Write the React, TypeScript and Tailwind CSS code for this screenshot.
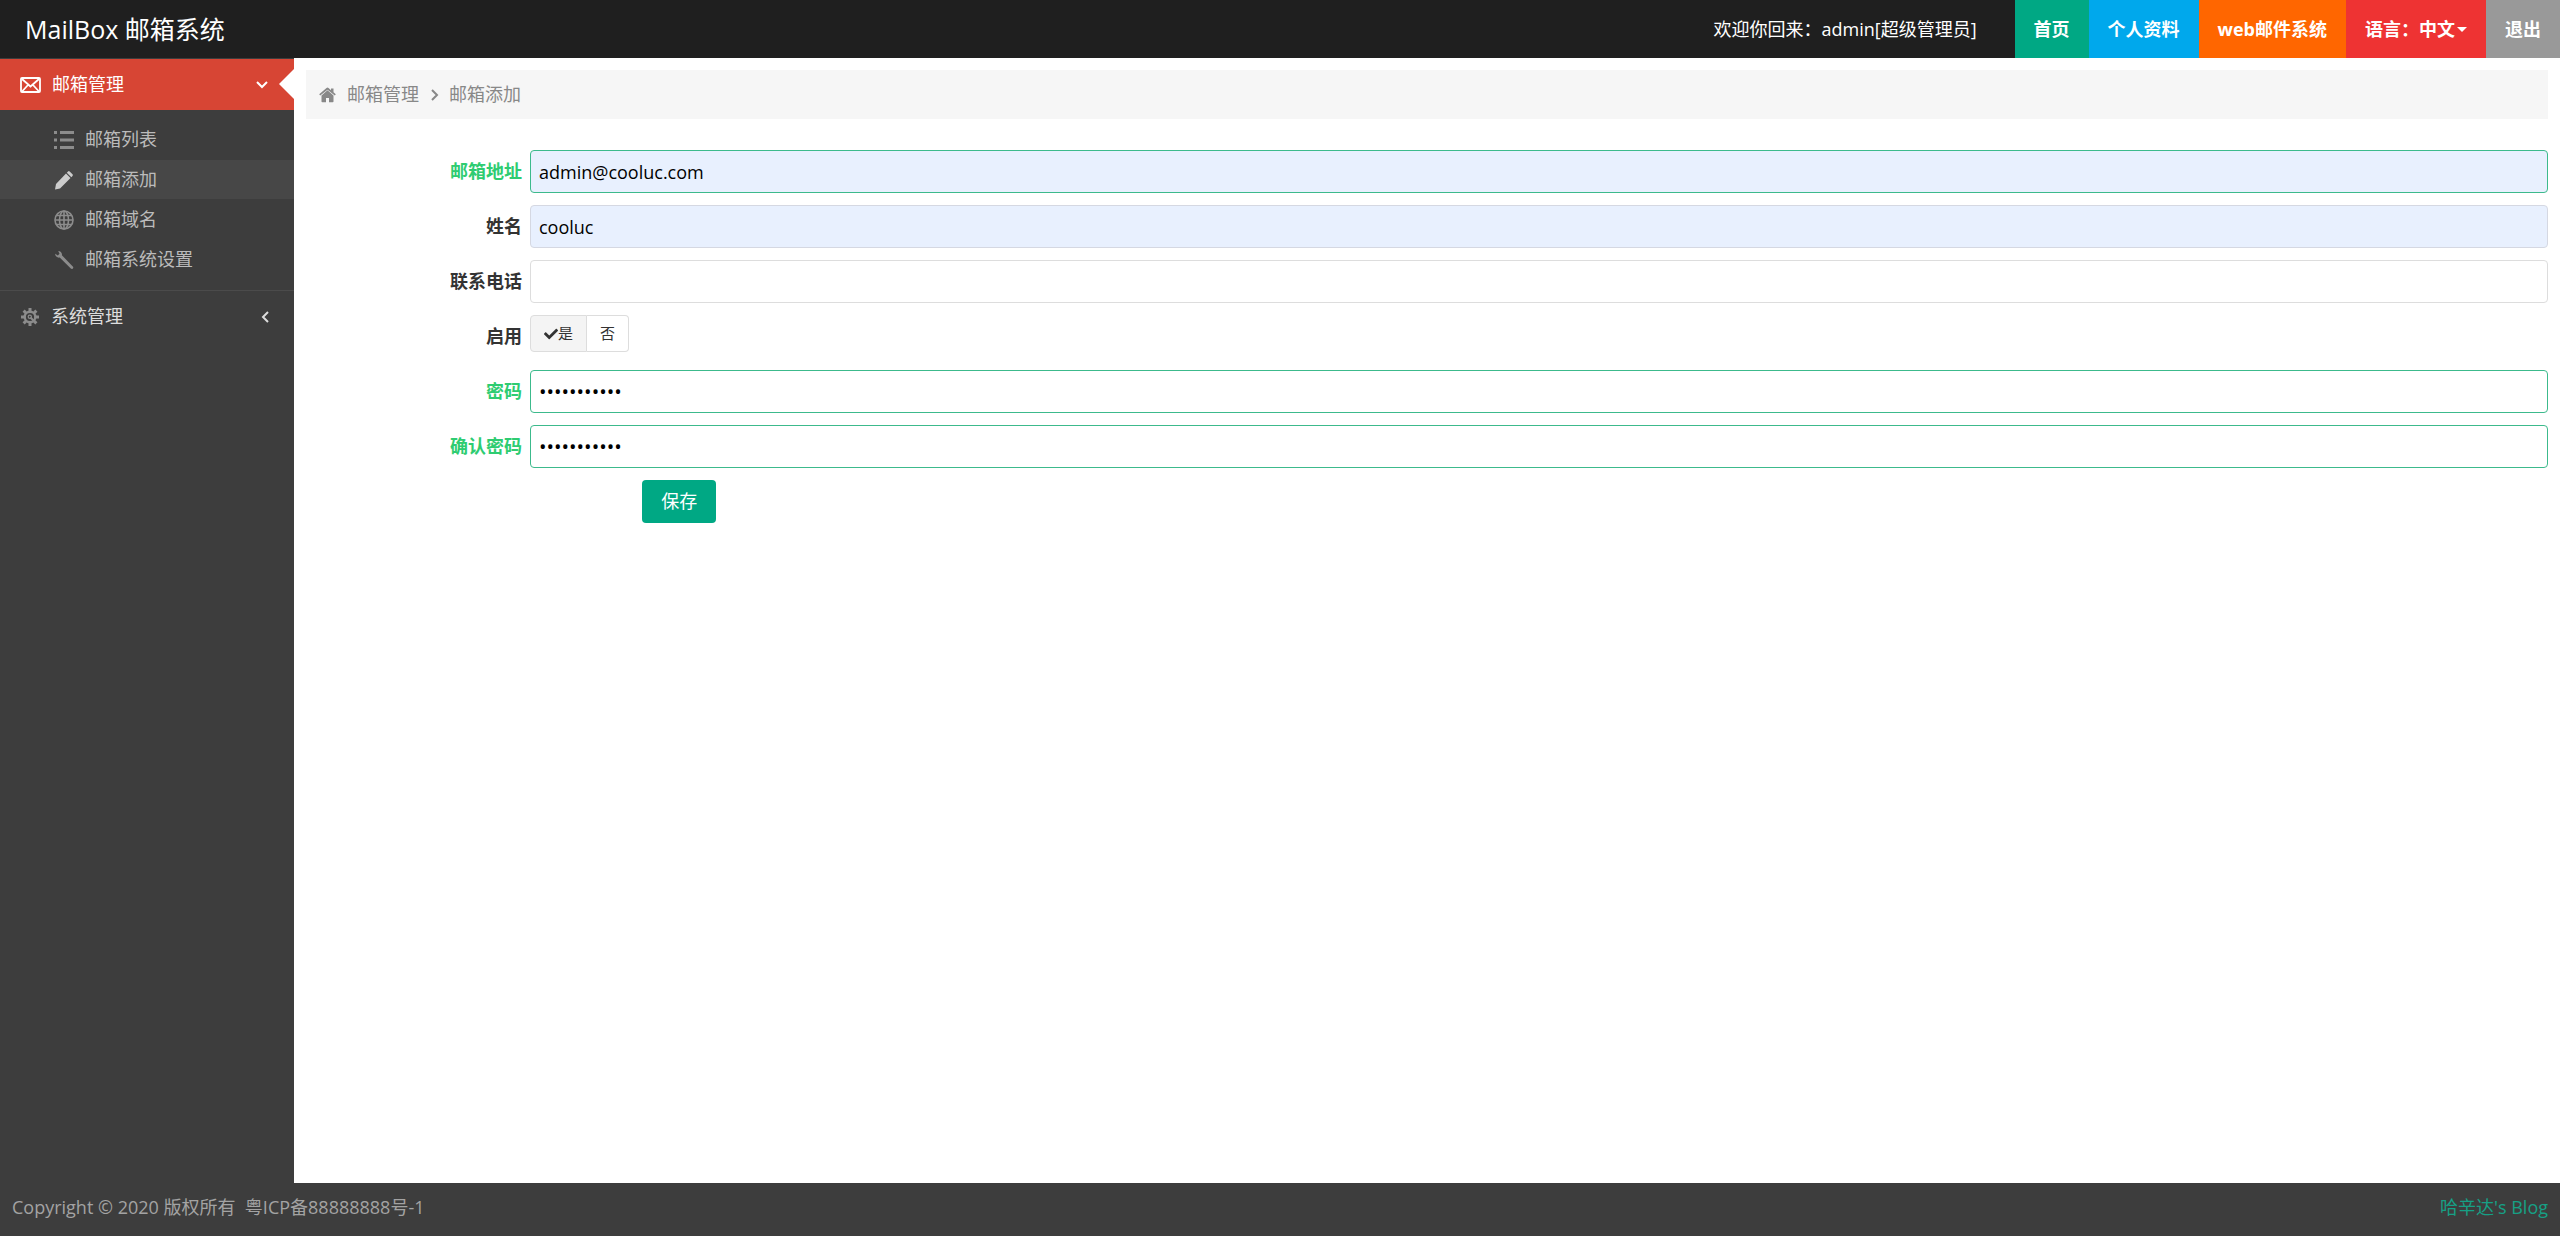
import { useState, type ReactNode } from "react";
import { FaCheck } from "react-icons/fa";

const TOP_LINKS = [
  { label: "首页", className: "bg-[#00a884]" },
  { label: "个人资料", className: "bg-[#00a8ec]" },
  { label: "web邮件系统", className: "bg-[#ff6600]" },
];

const SUB_ITEMS = [
  { label: "邮箱列表", icon: <ListIcon />, active: false },
  { label: "邮箱添加", icon: <PencilIcon />, active: true },
  { label: "邮箱域名", icon: <GlobeIcon />, active: false },
  { label: "邮箱系统设置", icon: <WrenchIcon />, active: false },
];

function EnvelopeIcon() {
  return (
    <svg width="21" height="16" viewBox="0 0 21 16" fill="none" stroke="currentColor" strokeWidth="1.8">
      <rect x="1" y="1" width="19" height="14" rx="1" />
      <path d="M2 2l8.500 7.500L19 2M2 14.500l6-6.500M19 14.500L13 8" />
    </svg>
  );
}

function ListIcon() {
  return (
    <svg width="20" height="20" viewBox="0 0 20 20" fill="currentColor">
      <path d="M0 1h3v3H0zM0 8.500h3v3H0zM0 16h3v3H0zM6 1h14v3H6zM6 8.500h14v3H6zM6 16h14v3H6z" />
    </svg>
  );
}

function PencilIcon() {
  return (
    <svg width="20" height="20" viewBox="0 0 20 20" fill="currentColor">
      <path d="M14 1.500a1.200 1.200 0 0 1 1.700 0l2.800 2.800a1.200 1.200 0 0 1 0 1.700L17.300 7.200 12.800 2.700zM12 3.500 16.500 8 6 18.500l-5 1 1-5.500z" />
    </svg>
  );
}

function GlobeIcon() {
  return (
    <svg width="20" height="20" viewBox="0 0 20 20" fill="none" stroke="currentColor" strokeWidth="1.6">
      <circle cx="10" cy="10" r="9" />
      <ellipse cx="10" cy="10" rx="4.500" ry="9" />
      <path d="M10 1v18M1 10h18M2.500 5.500h15M2.500 14.500h15" />
    </svg>
  );
}

function WrenchIcon() {
  return (
    <svg width="20" height="20" viewBox="0 0 20 20" fill="currentColor">
      <path d="M4.200 1C6.700 1 8.400 3 7.900 5.300L18.800 16.500a1.400 1.400 0 0 1-2 2L5.700 7.600C3.200 8 1 6.300 1.200 3.800l2.600 1.700 1.700-1.700z" />
    </svg>
  );
}

function GearIcon() {
  return (
    <svg width="18" height="18" viewBox="0 0 18 18" fill="none" stroke="currentColor">
      <circle cx="9" cy="9" r="5.300" strokeWidth="2.400" />
      <path d="M9 0v4M9 14v4M0 9h4M14 9h4M2.600 2.600l2.900 2.900M12.500 12.500l2.900 2.900M2.600 15.400l2.900-2.900M12.500 5.500l2.900-2.900" strokeWidth="3" />
      <path d="M9.500 9.500l4 4" strokeWidth="2" />
      <circle cx="8.800" cy="8.800" r="1.600" strokeWidth="1.200" />
    </svg>
  );
}

function HomeIcon() {
  return (
    <svg width="17" height="16" viewBox="0 0 17 16" fill="currentColor">
      <path d="M8.500 3.300 14.500 8.500v6a.8.800 0 0 1-.8.800H10V11H7v4.300H3.300a.8.800 0 0 1-.8-.8v-6z" />
      <path d="M7.500 1a1.500 1.500 0 0 1 2 0L12 3.200V1.500h2.500v3.800l2.300 2L15.800 8.500 8.500 2.700 1.200 8.500.2 7.300z" />
    </svg>
  );
}

function Angle({ className, d }: { className?: string; d: string }) {
  return (
    <svg className={className} width="12" height="12" viewBox="0 0 12 12" fill="none" stroke="currentColor" strokeWidth="2">
      <path d={d} />
    </svg>
  );
}

interface FieldProps {
  id: string;
  label: string;
  valid?: boolean;
  children: ReactNode;
}

function Field({ id, label, valid, children }: FieldProps) {
  return (
    <div className="mb-3 flex items-start">
      <label
        htmlFor={id}
        className={`w-[224px] shrink-0 pt-[9px] pr-2 text-right font-bold ${valid ? "text-[#2ecc71]" : "text-[#333333]"}`}
      >
        {label}
      </label>
      {children}
    </div>
  );
}

const INPUT = "h-[43px] min-w-0 flex-1 rounded border px-2 text-black outline-none";

function Header() {
  return (
    <header className="flex h-[58px] items-stretch justify-between bg-[#1f1f1f] text-white">
      <a href="#" className="flex items-center pl-[25px] text-[25px]">
        MailBox 邮箱系统
      </a>
      <div className="flex items-stretch">
        <span className="flex items-center pr-[38px]">欢迎你回来：admin[超级管理员]</span>
        {TOP_LINKS.map((link) => (
          <a key={link.label} href="#" className={`flex items-center px-[19px] font-bold ${link.className}`}>
            {link.label}
          </a>
        ))}
        <button type="button" className="flex items-center bg-[#ee3333] px-[19px] font-bold">
          语言：中文
          <span className="ml-[2px] border-x-[5px] border-t-[5px] border-x-transparent border-t-white" />
        </button>
        <a href="#" className="flex items-center bg-[#999999] px-[19px] font-bold">
          退出
        </a>
      </div>
    </header>
  );
}

function Sidebar() {
  return (
    <nav className="w-[294px] shrink-0 text-[#bbbbbb]">
      <a href="#" className="relative mt-px flex h-[51px] items-center bg-[#d74534] pl-5 text-white">
        <EnvelopeIcon />
        <span className="ml-[11px] flex-1">邮箱管理</span>
        <Angle className="mr-[26px]" d="M1 3l5 5 5-5" />
        <svg className="absolute top-[10px] right-0" width="15" height="30" viewBox="0 0 15 30" fill="#ffffff">
          <path d="M15 0v30L0 15z" />
        </svg>
      </a>
      <ul className="py-[10px]">
        {SUB_ITEMS.map((item) => (
          <li key={item.label} className="mb-px">
            <a
              href="#"
              className={`flex h-[39px] items-center gap-[11px] pl-[54px] ${item.active ? "bg-[#474747]" : ""}`}
            >
              <span className={item.active ? "text-[#cccccc]" : "text-[#8c8c8c]"}>{item.icon}</span>
              {item.label}
            </a>
          </li>
        ))}
      </ul>
      <a href="#" className="flex h-[52px] items-center border-t border-[#4b4b4b] pl-[21px] text-[#dddddd]">
        <span className="text-[#8c8c8c]">
          <GearIcon />
        </span>
        <span className="ml-3 flex-1">系统管理</span>
        <Angle className="mr-[23px]" d="M9 1L4 6l5 5" />
      </a>
    </nav>
  );
}

function MailboxForm() {
  const [enabled, setEnabled] = useState(true);

  return (
    <form className="mt-[31px]" onSubmit={(e) => e.preventDefault()}>
      <Field id="email" label="邮箱地址" valid>
        <input id="email" type="text" defaultValue="admin@cooluc.com" className={`${INPUT} border-[#3cba8c] bg-[#e8f0fe]`} />
      </Field>
      <Field id="name" label="姓名">
        <input id="name" type="text" defaultValue="cooluc" className={`${INPUT} border-[#d5d8e2] bg-[#e8f0fe]`} />
      </Field>
      <Field id="phone" label="联系电话">
        <input id="phone" type="text" className={`${INPUT} border-[#dddddd]`} />
      </Field>
      <Field id="enabled" label="启用">
        <div className="mb-[6px] flex h-[37px] text-[15px] text-[#333333]">
          <button
            id="enabled"
            type="button"
            onClick={() => setEnabled(true)}
            className={`flex items-center rounded-l border border-[#dddddd] px-[13px] ${enabled ? "bg-[#f4f4f4]" : ""}`}
          >
            {enabled && <FaCheck size={14} />}是
          </button>
          <button
            type="button"
            onClick={() => setEnabled(false)}
            className={`flex items-center rounded-r border border-l-0 border-[#dddddd] px-[13px] ${enabled ? "" : "bg-[#f4f4f4]"}`}
          >
            {!enabled && <FaCheck size={14} />}否
          </button>
        </div>
      </Field>
      <Field id="password" label="密码" valid>
        <input id="password" type="password" defaultValue="admin123456" className={`${INPUT} border-[#3cba8c] text-xl`} />
      </Field>
      <Field id="confirm" label="确认密码" valid>
        <input id="confirm" type="password" defaultValue="admin123456" className={`${INPUT} border-[#3cba8c] text-xl`} />
      </Field>
      <button type="submit" className="ml-[15%] h-[43px] rounded bg-[#00a884] px-[19px] text-white">
        保存
      </button>
    </form>
  );
}

export default function App() {
  return (
    <div className="flex min-h-screen flex-col bg-[#3d3d3d] font-['Open_Sans','Noto_Sans_CJK_SC',sans-serif] text-[18px] leading-[25px]">
      <Header />
      <div className="flex flex-1">
        <Sidebar />
        <main className="min-w-0 flex-1 bg-white px-3 pt-3">
          <div className="flex h-[49px] items-center bg-[#f6f6f6] pl-[13px] text-[#888888]">
            <HomeIcon />
            <a href="#" className="ml-[11px]">
              邮箱管理
            </a>
            <Angle className="mx-[9px]" d="M4 1l5 5-5 5" />
            <a href="#">邮箱添加</a>
          </div>
          <MailboxForm />
        </main>
      </div>
      <footer className="flex h-[53px] items-center justify-between px-3 pb-1 text-[#a3a3a3]">
        <span>Copyright © 2020 版权所有&nbsp; 粤ICP备88888888号-1</span>
        <a href="#" className="text-[#16a085]">
          哈辛达's Blog
        </a>
      </footer>
    </div>
  );
}
